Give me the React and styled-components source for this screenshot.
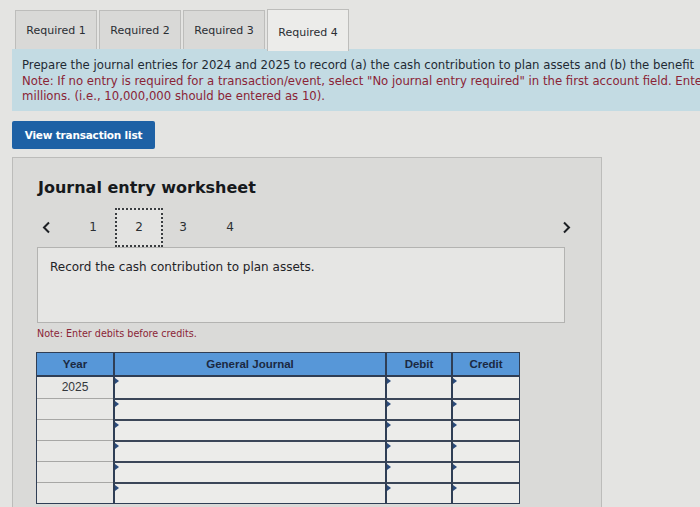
import React from 'react';
import styled, { createGlobalStyle } from 'styled-components';

const GlobalStyle = createGlobalStyle`
  html, body {
    margin: 0;
    padding: 0;
    background: #e4e4e2;
    overflow: hidden;
  }
  body {
    font-family: 'DejaVu Sans', Verdana, sans-serif;
  }
`;

const Page = styled.div`
  width: 688px;
  padding: 9px 0 0 12px;
`;

const TabBar = styled.div`
  display: flex;
  align-items: flex-end;
  column-gap: 2px;
  padding-left: 3px;
  height: 40px;
`;

const Tab = styled.div`
  display: flex;
  align-items: center;
  justify-content: center;
  width: 82px;
  height: ${p => (p.$active ? '42px' : '39px')};
  margin-bottom: ${p => (p.$active ? '-2px' : '0')};
  padding-top: ${p => (p.$active ? '3px' : '0')};
  box-sizing: border-box;
  font-size: 11px;
  color: #2a2e33;
  background: ${p => (p.$active ? '#ececea' : '#d9d9d7')};
  border: 1px solid #bdbdbb;
  border-bottom: none;
  position: relative;
  z-index: ${p => (p.$active ? 2 : 1)};
`;

const Instructions = styled.div`
  background: #c3dbe3;
  padding: 9px 0 6px 10px;
  font-size: 11.7px;
  line-height: 15.5px;
  color: #1f2a33;
  white-space: nowrap;
  overflow: hidden;
`;

const Note = styled.div`
  color: #8a2436;
`;

const ViewButton = styled.button`
  margin-top: 10px;
  width: 143px;
  height: 28px;
  border: none;
  border-radius: 2px;
  background: #1e61a5;
  color: #ffffff;
  font-family: 'DejaVu Sans', Verdana, sans-serif;
  font-weight: bold;
  font-size: 10.5px;
  letter-spacing: -0.2px;
  padding: 0;
`;

const Worksheet = styled.section`
  margin-top: 8px;
  width: 590px;
  min-height: 360px;
  box-sizing: border-box;
  padding: 20px 36px 0 24px;
  background: #dadad8;
  border: 1px solid #bcbcba;
`;

const Heading = styled.h2`
  margin: 0;
  padding-left: 1px;
  font-size: 16px;
  line-height: 20px;
  font-weight: bold;
  color: #16191c;
`;

const Pager = styled.div`
  display: flex;
  align-items: center;
  height: 39px;
  margin-top: 10px;
  padding-left: 5px;
`;

const Arrow = styled.span`
  display: flex;
  align-items: center;
  color: #1d2024;
  margin-left: ${p => (p.$right ? 'auto' : '0')};
  margin-right: ${p => (p.$right ? '-6px' : '0')};
`;

const PageNum = styled.span`
  display: flex;
  align-items: center;
  justify-content: center;
  flex-shrink: 0;
  width: ${p => (p.$current ? '48px' : '22px')};
  height: 39px;
  box-sizing: border-box;
  font-size: 12px;
  color: #2b2f33;
  border: ${p => (p.$current ? '2px dotted #3a3d40' : 'none')};
  background: ${p => (p.$current ? '#e3e3e1' : 'transparent')};
  margin-left: ${p => p.$gap}px;
`;

const RecordBox = styled.div`
  height: 76px;
  box-sizing: border-box;
  padding: 12px 12px;
  background: #e6e6e4;
  border: 1px solid #b3b3b1;
  font-size: 12px;
  color: #1f2327;
`;

const SmallNote = styled.div`
  margin-top: 5px;
  font-size: 9.6px;
  line-height: 12px;
  color: #8a2436;
`;

const Table = styled.div`
  margin-top: 12px;
  margin-left: -1px;
  width: 482px;
  display: grid;
  grid-template-columns: 76px 272px 66px 68px;
  font-family: 'Liberation Sans', Arial, sans-serif;
  border: 1px solid #2f3e55;
`;

const HeadCell = styled.div`
  height: 22px;
  display: flex;
  align-items: center;
  justify-content: center;
  background: #5797d8;
  font-size: 11.5px;
  font-weight: bold;
  color: #1b2942;
  border-left: ${p => (p.$first ? 'none' : '2px solid #2f3e55')};
  border-bottom: 2px solid #2f3e55;
`;

const YearCell = styled.div`
  height: 21px;
  box-sizing: border-box;
  display: flex;
  align-items: center;
  justify-content: center;
  background: #e8e8e6;
  font-size: 12px;
  color: #33373b;
  border-top: ${p => (p.$first ? 'none' : '1px solid #a7a7a5')};
`;

const InputCell = styled.div`
  position: relative;
  height: 21px;
  box-sizing: border-box;
  background: #ececea;
  border-left: 2px solid #2f3e55;
  border-top: ${p => (p.$first ? 'none' : '2px solid #3b4658')};

  &::before {
    content: '';
    position: absolute;
    left: 0;
    top: 1px;
    border-top: 3px solid transparent;
    border-bottom: 3px solid transparent;
    border-left: 4px solid #2a4a7a;
  }
`;

const ChevronLeft = () => (
  <svg width="9" height="13" viewBox="0 0 9 13">
    <path d="M7 1.5 L2 6.5 L7 11.5" fill="none" stroke="currentColor" strokeWidth="2" />
  </svg>
);

const ChevronRight = () => (
  <svg width="9" height="13" viewBox="0 0 9 13">
    <path d="M2 1.5 L7 6.5 L2 11.5" fill="none" stroke="currentColor" strokeWidth="2" />
  </svg>
);

const tabs = ['Required 1', 'Required 2', 'Required 3', 'Required 4'];
const rows = ['2025', '', '', '', '', ''];
const pages = [
  { n: 1, gap: 31 },
  { n: 2, gap: 11, current: true },
  { n: 3, gap: 9 },
  { n: 4, gap: 25 },
];

const App = () => {
  return (
    <>
      <GlobalStyle />
      <Page>
        <TabBar>
          {tabs.map((t, i) => (
            <Tab key={t} $active={i === 3}>
              {t}
            </Tab>
          ))}
        </TabBar>
        <Instructions>
          <div>
            Prepare the journal entries for 2024 and 2025 to record (a) the cash contribution to plan assets and (b) the benefit
          </div>
          <Note>
            Note: If no entry is required for a transaction/event, select "No journal entry required" in the first account field. Ente
          </Note>
          <Note>millions. (i.e., 10,000,000 should be entered as 10).</Note>
        </Instructions>

        <ViewButton>View transaction list</ViewButton>

        <Worksheet>
          <Heading>Journal entry worksheet</Heading>
          <Pager>
            <Arrow>
              <ChevronLeft />
            </Arrow>
            {pages.map(p => (
              <PageNum key={p.n} $gap={p.gap} $current={p.current}>
                {p.n}
              </PageNum>
            ))}
            <Arrow $right>
              <ChevronRight />
            </Arrow>
          </Pager>
          <RecordBox>Record the cash contribution to plan assets.</RecordBox>
          <SmallNote>Note: Enter debits before credits.</SmallNote>

          <Table>
            <HeadCell $first>Year</HeadCell>
            <HeadCell>General Journal</HeadCell>
            <HeadCell>Debit</HeadCell>
            <HeadCell>Credit</HeadCell>
            {rows.map((year, i) => (
              <React.Fragment key={i}>
                <YearCell $first={i === 0}>{year}</YearCell>
                <InputCell $first={i === 0} />
                <InputCell $first={i === 0} />
                <InputCell $first={i === 0} />
              </React.Fragment>
            ))}
          </Table>
        </Worksheet>
      </Page>
    </>
  );
};

export default App;
